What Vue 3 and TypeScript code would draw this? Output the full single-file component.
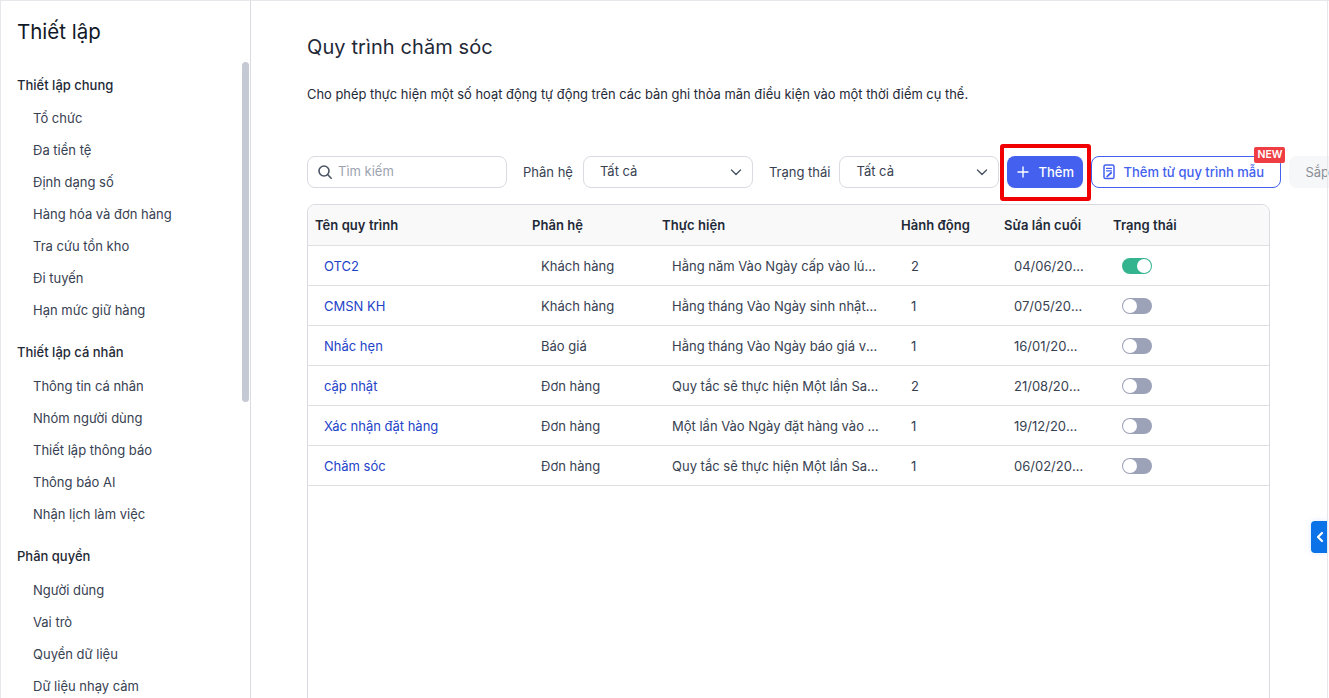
<script setup lang="ts">
interface Row {
  name: string;
  module: string;
  action: string;
  count: number;
  edited: string;
  active: boolean;
}

const groups = [
  {
    title: "Thiết lập chung",
    items: ["Tổ chức", "Đa tiền tệ", "Định dạng số", "Hàng hóa và đơn hàng", "Tra cứu tồn kho", "Đi tuyến", "Hạn mức giữ hàng"],
  },
  {
    title: "Thiết lập cá nhân",
    items: ["Thông tin cá nhân", "Nhóm người dùng", "Thiết lập thông báo", "Thông báo AI", "Nhận lịch làm việc"],
  },
  {
    title: "Phân quyền",
    items: ["Người dùng", "Vai trò", "Quyền dữ liệu", "Dữ liệu nhạy cảm"],
  },
];

const rows: Row[] = [
  { name: "OTC2", module: "Khách hàng", action: "Hằng năm Vào Ngày cấp vào lúc 08:00", count: 2, edited: "04/06/2024 10:15", active: true },
  { name: "CMSN KH", module: "Khách hàng", action: "Hằng tháng Vào Ngày sinh nhật vào lúc", count: 1, edited: "07/05/2024 09:40", active: false },
  { name: "Nhắc hẹn", module: "Báo giá", action: "Hằng tháng Vào Ngày báo giá vào lúc", count: 1, edited: "16/01/2024 14:20", active: false },
  { name: "cập nhật", module: "Đơn hàng", action: "Quy tắc sẽ thực hiện Một lần Sau khi", count: 2, edited: "21/08/2023 11:05", active: false },
  { name: "Xác nhận đặt hàng", module: "Đơn hàng", action: "Một lần Vào Ngày đặt hàng vào lúc 09:00", count: 1, edited: "19/12/2023 16:30", active: false },
  { name: "Chăm sóc", module: "Đơn hàng", action: "Quy tắc sẽ thực hiện Một lần Sau khi", count: 1, edited: "06/02/2023 08:50", active: false },
];
</script>

<template>
  <div class="page">
    <aside class="sidebar">
      <h1 class="sidebar-title">Thiết lập</h1>
      <div v-for="group in groups" :key="group.title" class="group">
        <div class="group-title">{{ group.title }}</div>
        <a v-for="item in group.items" :key="item" class="group-item">{{ item }}</a>
      </div>
      <div class="scroll-thumb"></div>
    </aside>

    <main class="main">
      <h2 class="title">Quy trình chăm sóc</h2>
      <p class="desc">Cho phép thực hiện một số hoạt động tự động trên các bản ghi thỏa mãn điều kiện vào một thời điểm cụ thể.</p>

      <div class="toolbar">
        <div class="search">
          <svg width="16" height="16" viewBox="0 0 16 16" fill="none" stroke="#4b5563" stroke-width="1.6" stroke-linecap="round">
            <circle cx="7" cy="7" r="5" />
            <path d="M10.8 10.8 14.2 14.2" />
          </svg>
          <span>Tìm kiếm</span>
        </div>
        <span class="filter-label first">Phân hệ</span>
        <div class="select module-select">
          <span>Tất cả</span>
          <svg width="12" height="12" viewBox="0 0 12 12" fill="none" stroke="#4b5563" stroke-width="1.4" stroke-linecap="round" stroke-linejoin="round">
            <path d="M1.5 4 6 8.5 10.5 4" />
          </svg>
        </div>
        <span class="filter-label second">Trạng thái</span>
        <div class="select status-select">
          <span>Tất cả</span>
          <svg width="12" height="12" viewBox="0 0 12 12" fill="none" stroke="#4b5563" stroke-width="1.4" stroke-linecap="round" stroke-linejoin="round">
            <path d="M1.5 4 6 8.5 10.5 4" />
          </svg>
        </div>
        <button class="btn-add">
          <svg width="12" height="12" viewBox="0 0 12 12" fill="none" stroke="#fff" stroke-width="1.4" stroke-linecap="round">
            <path d="M6 1v10M1 6h10" />
          </svg>
          Thêm
          <span class="highlight"></span>
        </button>
        <button class="btn-template">
          <svg width="14" height="16" viewBox="0 0 14 16" fill="none" stroke="#4361ee" stroke-linecap="round" stroke-linejoin="round">
            <rect x="2" y="1" width="10" height="13.6" rx="1.6" stroke-width="1.5" />
            <path d="M4.6 4.4h4.8M4.6 6.8h4.8" stroke-width="1.3" />
            <path d="M9.2 8.8 5.2 12.4" stroke-width="1.9" />
          </svg>
          Thêm từ quy trình mẫu
          <span class="badge">NEW</span>
        </button>
        <button class="btn-sort">Sắp xếp</button>
      </div>

      <div class="table">
        <div class="table-row table-head">
          <div>Tên quy trình</div>
          <div>Phân hệ</div>
          <div>Thực hiện</div>
          <div>Hành động</div>
          <div>Sửa lần cuối</div>
          <div>Trạng thái</div>
        </div>
        <div v-for="row in rows" :key="row.name" class="table-row table-body">
          <div class="cell-name">{{ row.name }}</div>
          <div>{{ row.module }}</div>
          <div class="cell-clip action">{{ row.action }}</div>
          <div class="count">{{ row.count }}</div>
          <div class="cell-clip edited">{{ row.edited }}</div>
          <div>
            <span class="switch" :class="{ on: row.active }"><i></i></span>
          </div>
        </div>
      </div>
    </main>

    <button class="side-tab">
      <svg width="8" height="12" viewBox="0 0 8 12" fill="none" stroke="#fff" stroke-width="2.2" stroke-linecap="round" stroke-linejoin="round">
        <path d="M6 2 2 6l4 4" />
      </svg>
    </button>
  </div>
</template>

<style scoped>
.page {
  width: 1329px;
  height: 698px;
  position: relative;
  display: flex;
  overflow: hidden;
  box-sizing: border-box;
  border-top: 1px solid #e5e7eb;
  background: #fff;
  color: #1f2937;
  font-family: Inter, "Noto Sans", sans-serif;
  font-size: 13px;
}

.page::after {
  content: "";
  position: absolute;
  top: 0;
  right: 1px;
  bottom: 0;
  width: 1px;
  background: #e5e7eb;
}

.sidebar {
  width: 251px;
  flex: none;
  box-sizing: border-box;
  position: relative;
  padding: 17px 0 0 17px;
  border-left: 1px solid #e5e7eb;
  border-right: 1px solid #d9dbe0;
  overflow: hidden;
}

.sidebar-title {
  margin: 0 0 26.7px -1px;
  font-size: 20.5px;
  line-height: 28px;
  font-weight: 400;
  color: #111827;
}

.group {
  margin-bottom: 14.2px;
}

.group-title {
  margin-left: -1px;
  height: 24px;
  line-height: 24px;
  font-size: 13px;
  font-weight: 500;
  margin-bottom: 5.5px;
  color: #1f2937;
}

.group-item {
  display: block;
  height: 32px;
  line-height: 32px;
  padding-left: 15px;
  color: #374151;
}

.scroll-thumb {
  position: absolute;
  top: 61px;
  left: 241px;
  width: 7px;
  height: 340px;
  border-radius: 4px;
  background: #c5c9d3;
}

.main {
  flex: none;
  width: 1078px;
  box-sizing: border-box;
  padding: 34px 0 0 56px;
}

.title {
  margin: 0;
  font-size: 20px;
  line-height: 24px;
  font-weight: 400;
  color: #1f2937;
  letter-spacing: 0.1px;
}

.desc {
  margin: 27px 0 0;
  line-height: 16px;
  font-size: 12.92px;
  color: #1f2937;
  white-space: nowrap;
}

.toolbar {
  margin-top: 54px;
  display: flex;
  align-items: center;
  height: 32px;
  white-space: nowrap;
}

.search {
  flex: none;
  width: 200px;
  height: 32px;
  box-sizing: border-box;
  display: flex;
  align-items: center;
  gap: 5px;
  padding-left: 9px;
  border: 1px solid #d9dbe0;
  border-radius: 8px;
  color: #9ca3af;
}

.search span {
  margin-top: -2px;
}

.filter-label {
  flex: none;
  color: #374151;
}

.filter-label.first {
  margin: 0 10px 0 16px;
}

.filter-label.second {
  margin: 0 9px 0 16px;
}

.select {
  flex: none;
  height: 32px;
  box-sizing: border-box;
  display: flex;
  align-items: center;
  justify-content: space-between;
  padding: 0 10px 0 16px;
  border: 1px solid #d9dbe0;
  border-radius: 8px;
  color: #374151;
}

.select span {
  margin-top: -2px;
}

.module-select {
  width: 170px;
}

.status-select {
  width: 160px;
}

button {
  font-family: inherit;
  font-size: 13px;
  font-weight: 500;
}

.btn-add {
  flex: none;
  position: relative;
  width: 76px;
  height: 32px;
  margin-left: 8px;
  padding: 0 0 0 10px;
  border: none;
  border-radius: 8px;
  background: #4361ee;
  color: #fff;
  display: flex;
  align-items: center;
  gap: 9px;
}

.highlight {
  position: absolute;
  top: -12px;
  left: -7px;
  right: -8px;
  bottom: -13px;
  box-sizing: border-box;
  border: 4px solid #f00000;
  border-radius: 3px;
}

.btn-template {
  flex: none;
  position: relative;
  width: 190px;
  height: 32px;
  margin-left: 8px;
  padding: 0 0 0 10px;
  box-sizing: border-box;
  border: 1px solid #4361ee;
  border-radius: 8px;
  background: #fff;
  color: #4361ee;
  display: flex;
  align-items: center;
  gap: 7px;
  font-weight: 500;
}

.badge {
  position: absolute;
  top: -10px;
  right: -5px;
  width: 31px;
  height: 16px;
  border-radius: 2px;
  background: #ef3e43;
  color: #fff;
  font-size: 10.5px;
  font-weight: 600;
  line-height: 16px;
  text-align: center;
}

.btn-sort {
  flex: none;
  width: 80px;
  height: 32px;
  margin-left: 8px;
  padding: 0 0 0 16px;
  border: none;
  border-radius: 8px;
  background: #f6f7f9;
  color: #8a8f98;
  text-align: left;
  font-weight: 400;
}

.table {
  width: 963px;
  height: 600px;
  margin-top: 16px;
  box-sizing: border-box;
  border: 1px solid #d9dbe0;
  border-radius: 8px;
  overflow: hidden;
}

.table-row {
  display: grid;
  grid-template-columns: 217px 130px 239px 103px 109px 1fr;
  align-items: center;
  box-sizing: border-box;
  border-bottom: 1px solid #e0e0e0;
}

.table-head {
  height: 41px;
  background: #f9f9f9;
  font-weight: 600;
  letter-spacing: 0.05px;
  color: #1f2937;
}

.table-head > div {
  padding-left: 7px;
}

.table-body {
  height: 40px;
  color: #374151;
}

.table-body > div {
  padding-left: 16px;
}

.table-body > .action,
.table-body > .count,
.table-body > .edited {
  padding-left: 17px;
}

.cell-name {
  color: #2343c8;
}

.cell-clip {
  overflow: hidden;
  text-overflow: ellipsis;
  white-space: nowrap;
}

.action {
  padding-right: 15px;
}

.edited {
  padding-right: 21px;
}

.switch {
  display: block;
  width: 30px;
  height: 16px;
  box-sizing: border-box;
  padding: 1px;
  border-radius: 8px;
  background: #9ca3b8;
}

.switch i {
  display: block;
  width: 14px;
  height: 14px;
  border-radius: 50%;
  background: #fff;
}

.switch.on {
  background: #34b38f;
}

.switch.on i {
  margin-left: 14px;
}

.side-tab {
  position: absolute;
  top: 520px;
  right: 2px;
  width: 16px;
  height: 32px;
  padding: 0 0 0 1px;
  border: none;
  border-radius: 4px 0 0 4px;
  background: #0b72e7;
  box-shadow: 0 0 6px rgba(11, 114, 231, 0.15);
  display: flex;
  align-items: center;
  justify-content: center;
}
</style>

<style>
html,
body {
  margin: 0;
  overflow: hidden;
}
</style>
